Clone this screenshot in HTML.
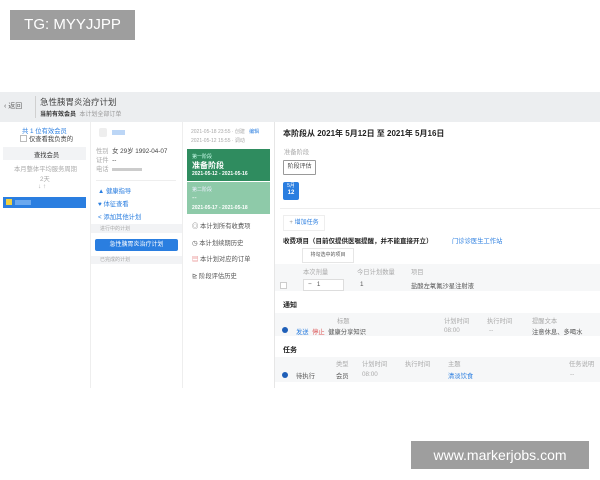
<html><head><style>
body{margin:0;width:600px;height:480px;background:#fff;position:relative;overflow:hidden;font-family:"Liberation Sans","Noto Sans CJK SC",sans-serif;color:#333}
div,span{position:absolute;white-space:nowrap}
.s{font-size:6.3px;color:#555}
.g{color:#aaa}
.b{color:#2a7ee0}
.bar{background:#f2f3f5}
</style></head><body>
<div style="left:10px;top:10px;width:125px;height:30px;background:#9e9e9e;color:#fff;font-size:15px;line-height:30px;text-align:center">TG: MYYJJPP</div>

<div style="left:0;top:92px;width:600px;height:30px;background:#eceef0"></div>
<div class="s" style="left:4px;top:101px;font-size:7px;color:#666">‹ 返回</div>
<div style="left:35px;top:96px;width:1px;height:22px;background:#d0d0d0"></div>
<div style="left:40px;top:96px;font-size:8.5px;color:#444">急性胰胃炎治疗计划</div>
<div style="left:40px;top:109px;font-size:6px;font-weight:bold;color:#333">当前有效会员 <span style="position:static;font-weight:normal;color:#999">&nbsp;本计划全部订单</span></div>

<div style="left:90px;top:122px;width:1px;height:266px;background:#eee"></div>
<div style="left:182px;top:122px;width:1px;height:266px;background:#eee"></div>
<div style="left:274px;top:122px;width:1px;height:266px;background:#e6e6e6"></div>

<div class="s b" style="left:22px;top:126px">共 1 位有效会员</div>
<div style="left:20px;top:135px;width:5px;height:5px;border:1px solid #bbb"></div>
<div class="s" style="left:29px;top:134px;color:#444">仅查看我负责的</div>
<div class="bar" style="left:3px;top:147px;width:83px;height:13px"></div>
<div class="s" style="left:34px;top:150px;color:#333">查找会员</div>
<div class="s g" style="left:14px;top:164px">本月整体平均服务周期</div>
<div class="s g" style="left:40px;top:174px">2天</div>
<div class="s g" style="left:38px;top:183px">↓ ↑</div>
<div style="left:3px;top:197px;width:83px;height:11px;background:#2a7ee0"></div>
<div style="left:6px;top:199px;width:6px;height:6px;background:#f0d040"></div>
<div style="left:15px;top:200px;width:16px;height:5px;background:#6aa8ee"></div>

<div style="left:99px;top:128px;width:8px;height:9px;background:#eee;border-radius:2px"></div>
<div style="left:112px;top:130px;width:13px;height:5px;background:#bcd6f6"></div>
<div class="s g" style="left:96px;top:146px">性别&nbsp;&nbsp;<span style="position:static;color:#444">女 29岁 1992-04-07</span></div>
<div class="s g" style="left:96px;top:155px">证件&nbsp;&nbsp;<span style="position:static;color:#444">--</span></div>
<div class="s g" style="left:96px;top:164px">电话 &nbsp;<span style="position:static;display:inline-block;width:30px;height:3px;background:#ccc"></span></div>
<div style="left:96px;top:180px;width:80px;height:1px;background:#eee"></div>
<div class="s b" style="left:98px;top:186px">▲ 健康指导</div>
<div class="s b" style="left:98px;top:199px">♥ 体征查看</div>
<div class="s b" style="left:98px;top:212px">&lt; 添加其他计划</div>
<div class="bar" style="left:91px;top:224px;width:91px;height:9px"></div>
<div class="s g" style="left:100px;top:225px;font-size:5px">进行中的计划</div>
<div style="left:95px;top:239px;width:83px;height:12px;background:#2a7ee0;border-radius:2px;color:#fff;font-size:6px;line-height:12px;text-align:center">急性胰胃炎治疗计划</div>
<div class="bar" style="left:91px;top:256px;width:91px;height:8px"></div>
<div class="s g" style="left:100px;top:256px;font-size:5px">已完成的计划</div>

<div class="s g" style="left:191px;top:128px;font-size:5px">2021-05-18 23:55 · 创建 &nbsp;&nbsp;<span style="position:static;color:#2a7ee0">编辑</span></div>
<div class="s g" style="left:191px;top:137px;font-size:5px">2021-05-12 15:55 · 调动</div>
<div style="left:187px;top:149px;width:83px;height:32px;background:#2f8c5f"></div>
<div style="left:192px;top:153px;font-size:5px;color:#cfe">第一阶段</div>
<div style="left:192px;top:160px;font-size:8px;color:#fff;font-weight:bold">准备阶段</div>
<div style="left:192px;top:171px;font-size:5px;color:#fff;font-weight:bold">2021-05-12 - 2021-05-16</div>
<div style="left:187px;top:182px;width:83px;height:32px;background:#8ecaa9"></div>
<div style="left:192px;top:186px;font-size:5px;color:#eef">第二阶段</div>
<div style="left:192px;top:195px;font-size:7px;color:#fff">--</div>
<div style="left:192px;top:205px;font-size:5px;color:#fff;font-weight:bold">2021-05-17 - 2021-05-18</div>
<div class="s" style="left:192px;top:221px">◎ 本计划所有收费项</div>
<div class="s" style="left:192px;top:238px">◷ 本计划续期历史</div>
<div class="s" style="left:192px;top:254px"><span style="position:static;color:#d55">▤</span> 本计划对应的订单</div>
<div class="s" style="left:192px;top:271px">⊵ 阶段评估历史</div>

<div style="left:283px;top:128px;font-size:8px;font-weight:bold;color:#222">本阶段从 2021年 5月12日 至 2021年 5月16日</div>
<div class="s g" style="left:284px;top:147px">准备阶段</div>
<div style="left:283px;top:160px;width:31px;height:13px;border:1px solid #999;border-radius:1px;font-size:6px;line-height:13px;text-align:center;color:#444">阶段评估</div>
<div style="left:283px;top:182px;width:16px;height:17px;background:#2a7ee0;border-radius:2px;color:#fff;font-size:5px;text-align:center;line-height:7px;padding-top:1px">5月<br><b style="font-size:6px">12</b></div>
<div style="left:280px;top:208px;width:320px;height:1px;background:#eee"></div>
<div style="left:283px;top:215px;width:40px;height:14px;border:1px solid #eee;font-size:6px;line-height:14px;text-align:center;color:#2a7ee0"><span style="position:static;color:#999">+</span> 增加任务</div>
<div style="left:283px;top:235px;font-size:6.5px;font-weight:bold;color:#222">收费项目（目前仅提供医嘱提醒，并不能直接开立）</div>
<div class="s b" style="left:452px;top:236px">门诊诊医生工作站</div>
<div style="left:302px;top:248px;width:50px;height:13px;border:1px solid #e6e6e6;font-size:5px;line-height:13px;text-align:center;color:#555">将勾选中的项目</div>
<div class="bar" style="left:275px;top:264px;width:325px;height:27px;background:#f6f7f8"></div>
<div class="s g" style="left:303px;top:267px">本次剂量</div>
<div class="s g" style="left:357px;top:267px">今日计划数量</div>
<div class="s g" style="left:411px;top:267px">项目</div>
<div style="left:280px;top:282px;width:5px;height:5px;border:1px solid #ccc;background:#fff"></div>
<div style="left:303px;top:279px;width:39px;height:10px;background:#fff;border:1px solid #ddd"></div>
<div class="s" style="left:308px;top:281px">− &nbsp;&nbsp;1</div>
<div class="s" style="left:360px;top:281px">1</div>
<div class="s" style="left:411px;top:281px">盐酸左氧氟沙星注射液</div>
<div style="left:283px;top:300px;font-size:7px;font-weight:bold;color:#222">通知</div>
<div class="bar" style="left:275px;top:313px;width:325px;height:23px;background:#f6f7f8"></div>
<div class="s g" style="left:337px;top:316px">标题</div>
<div class="s g" style="left:444px;top:316px">计划时间</div>
<div class="s g" style="left:487px;top:316px">执行时间</div>
<div class="s g" style="left:532px;top:316px">提醒文本</div>
<div style="left:282px;top:327px;width:6px;height:6px;border-radius:50%;background:#1f5fb8"></div>
<div class="s" style="left:296px;top:327px"><span style="position:static;color:#2a7ee0">发送</span> &nbsp;<span style="position:static;color:#d55">停止</span> &nbsp;健康分享知识</div>
<div class="s g" style="left:444px;top:327px">08:00</div>
<div class="s g" style="left:489px;top:327px">--</div>
<div class="s" style="left:532px;top:327px">注意休息、多喝水</div>
<div style="left:283px;top:345px;font-size:7px;font-weight:bold;color:#222">任务</div>
<div class="bar" style="left:275px;top:357px;width:325px;height:25px;background:#f6f7f8"></div>
<div class="s g" style="left:336px;top:359px">类型</div>
<div class="s g" style="left:362px;top:359px">计划时间</div>
<div class="s g" style="left:405px;top:359px">执行时间</div>
<div class="s g" style="left:448px;top:359px">主题</div>
<div class="s g" style="left:569px;top:359px">任务说明</div>
<div style="left:282px;top:372px;width:6px;height:6px;border-radius:50%;background:#1f5fb8"></div>
<div class="s" style="left:296px;top:371px">待执行</div>
<div class="s" style="left:336px;top:371px">会员</div>
<div class="s g" style="left:362px;top:371px">08:00</div>
<div class="s b" style="left:448px;top:371px">清淡饮食</div>
<div class="s g" style="left:570px;top:371px">--</div>

<div style="left:411px;top:441px;width:178px;height:28px;background:#9e9e9e;color:#fff;font-size:14px;line-height:28px;text-align:center">www.markerjobs.com</div>
</body></html>
